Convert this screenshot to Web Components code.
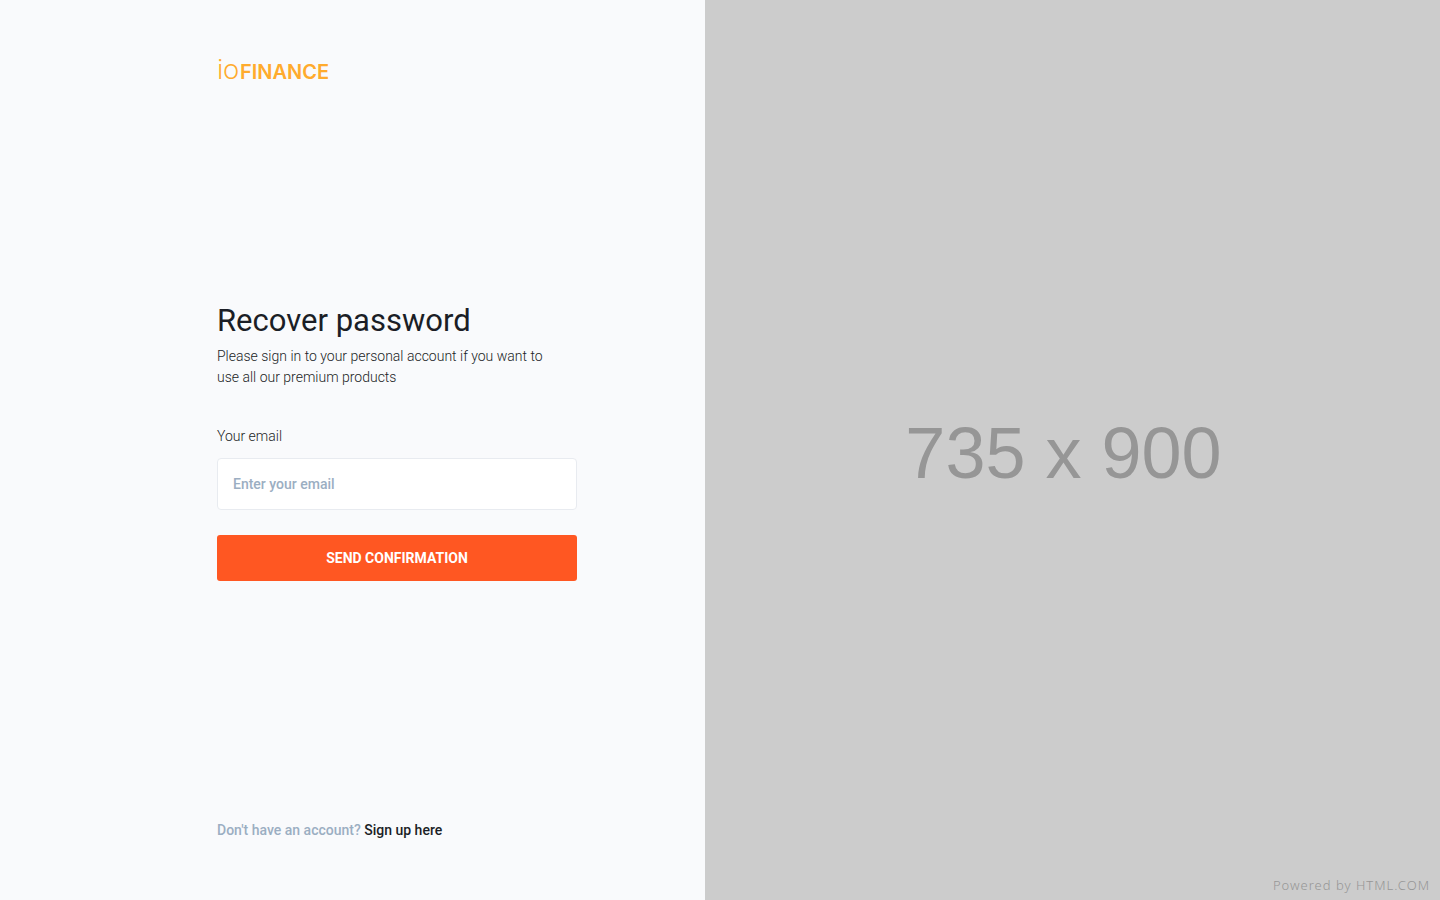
<!DOCTYPE html>
<html lang="en">
<head>
<meta charset="utf-8">
<meta name="viewport" content="width=device-width, initial-scale=1">
<title>Recover password</title>
<style>
body { margin: 0; background: #f9fafc; color: #1b1e26; font: 14px/21px Roboto, sans-serif; letter-spacing: 0; }
</style>
</head>
<body>
<recover-page></recover-page>
<script>
const define = (name, html) => customElements.define(name, class extends HTMLElement {
  constructor() {
    super();
    this.attachShadow({ mode: 'open' }).innerHTML = html;
  }
});

define('brand-logo', `
<style>
:host { display: block; color: #ffab2d; }
a { display: inline-flex; align-items: baseline; gap: 1px; color: inherit; text-decoration: none; font-size: 20px; line-height: 24px; }
.thin { font-size: 28px; font-weight: 300; }
.bold { font-family: Inter, sans-serif; font-weight: 600; }
</style>
<a href="#"><span class="thin">io</span><span class="bold">FINANCE</span></a>`);

define('email-field', `
<style>
:host { display: block; }
label { display: block; margin-bottom: 11px; font-weight: 300; }
input { display: block; box-sizing: border-box; width: 100%; height: 52px; padding: 0 15px; border: 1px solid #e8ebf0; border-radius: 4px; background: #fff; color: #1b1e26; font: 500 14px/21px Roboto, sans-serif; outline: none; }
input:focus { border-color: #ff5722; }
input::placeholder { color: #9baec2; opacity: 1; }
</style>
<label for="email"><slot></slot></label>
<input id="email" type="email" placeholder="Enter your email">`);

define('action-button', `
<style>
:host { display: block; }
button { display: block; width: 100%; height: 46px; padding: 1px 0 0; border: 0; border-radius: 3px; background: #ff5722; color: #fff; font: 700 14px/21px Roboto, sans-serif; text-transform: uppercase; cursor: pointer; }
</style>
<button type="button"><slot></slot></button>`);

define('recover-form', `
<style>
:host { display: block; padding-bottom: 22px; }
h1 { margin: 0 0 7px; font-size: 31px; line-height: 36px; font-weight: 400; }
p { margin: 0 0 38px; font-weight: 300; max-width: 340px; }
email-field { margin-bottom: 25px; }
</style>
<h1>Recover password</h1>
<p>Please sign in to your personal account if you want to use all our premium products</p>
<email-field>Your email</email-field>
<action-button>Send confirmation</action-button>`);

define('signup-hint', `
<style>
:host { display: block; font-weight: 500; color: #9baec2; }
a { color: #1b1e26; text-decoration: none; }
</style>
Don't have an account? <a href="#">Sign up here</a>`);

define('image-placeholder', `
<style>
:host { display: grid; grid-template-rows: 1fr auto 1fr; background: #ccc; color: #969696; }
.size { grid-row: 2; text-align: center; padding: 6px 18px 0 0; font: 72px/88px "Liberation Sans Narrow", "Liberation Sans", sans-serif; }
.credit { grid-row: 3; align-self: end; justify-self: end; padding: 0 10px 7px; font: 300 13px/16px "Noto Sans", sans-serif; letter-spacing: 1px; }
</style>
<div class="size">735 x 900</div>
<div class="credit">Powered by HTML.COM</div>`);

define('recover-page', `
<style>
:host { display: grid; grid-template-columns: 47fr 49fr; min-height: 100vh; }
main { display: flex; flex-direction: column; justify-content: space-between; align-items: flex-end; box-sizing: border-box; padding: 58px 128px 59px 24px; }
main > * { width: 100%; max-width: 360px; }
@media (max-width: 900px) {
  :host { grid-template-columns: 1fr; }
  main { align-items: center; padding: 58px 24px 59px; }
  image-placeholder { display: none; }
}
</style>
<main>
  <brand-logo></brand-logo>
  <recover-form></recover-form>
  <signup-hint></signup-hint>
</main>
<image-placeholder></image-placeholder>`);
</script>
</body>
</html>
